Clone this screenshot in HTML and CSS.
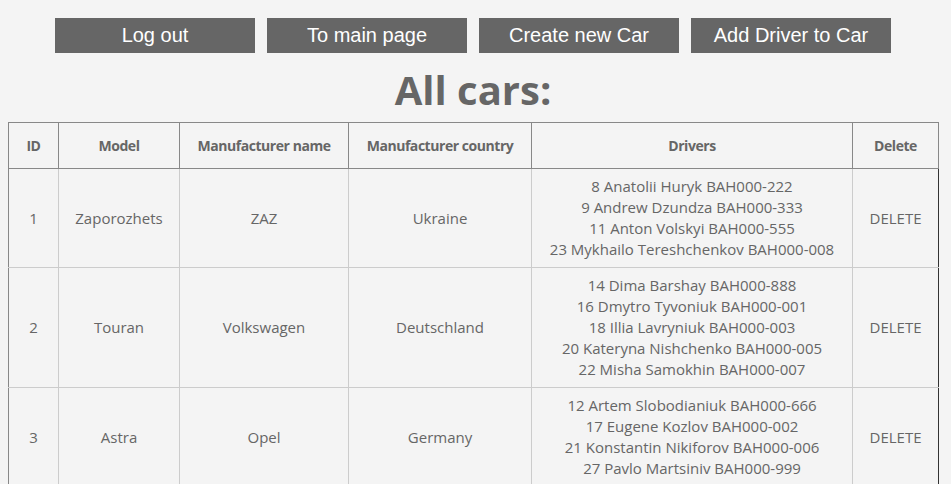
FILE: index.html
```html
<!DOCTYPE html>
<html>
<head>
<meta charset="utf-8">
<link rel="stylesheet" href="styles.css">
</head>
<body>
<nav class="actions">
  <a class="btn" href="#">Log out</a>
  <a class="btn" href="#">To main page</a>
  <a class="btn" href="#">Create new Car</a>
  <a class="btn" href="#">Add Driver to Car</a>
</nav>
<h1 class="title">All cars:</h1>
<table class="cars">
  <colgroup>
    <col class="c-id"><col class="c-model"><col class="c-man"><col class="c-country"><col class="c-drivers"><col class="c-del">
  </colgroup>
  <thead>
    <tr><th>ID</th><th>Model</th><th>Manufacturer name</th><th>Manufacturer country</th><th>Drivers</th><th>Delete</th></tr>
  </thead>
  <tbody>
    <tr>
      <td>1</td><td>Zaporozhets</td><td>ZAZ</td><td>Ukraine</td>
      <td>8 Anatolii Huryk BAH000-222<br>9 Andrew Dzundza BAH000-333<br>11 Anton Volskyi BAH000-555<br>23 Mykhailo Tereshchenkov BAH000-008</td>
      <td>DELETE</td>
    </tr>
    <tr>
      <td>2</td><td>Touran</td><td>Volkswagen</td><td>Deutschland</td>
      <td>14 Dima Barshay BAH000-888<br>16 Dmytro Tyvoniuk BAH000-001<br>18 Illia Lavryniuk BAH000-003<br>20 Kateryna Nishchenko BAH000-005<br>22 Misha Samokhin BAH000-007</td>
      <td>DELETE</td>
    </tr>
    <tr>
      <td>3</td><td>Astra</td><td>Opel</td><td>Germany</td>
      <td>12 Artem Slobodianiuk BAH000-666<br>17 Eugene Kozlov BAH000-002<br>21 Konstantin Nikiforov BAH000-006<br>27 Pavlo Martsiniv BAH000-999</td>
      <td>DELETE</td>
    </tr>
  </tbody>
</table>
</body>
</html>
```
FILE: styles.css
```css
html, body { background: #f4f4f4; }
body {
  margin: 0;
  padding: 18px 13px 0 8px;
  font-family: "Open Sans", "DejaVu Sans", sans-serif;
  color: #666;
}
.actions {
  display: flex;
  justify-content: center;
  gap: 12px;
}
.btn {
  display: block;
  width: 200px;
  height: 35px;
  line-height: 35px;
  background: #666;
  color: #fff;
  text-align: center;
  text-decoration: none;
  font-family: "Liberation Sans", Arial, sans-serif;
  font-size: 20px;
}
.title {
  margin: 12px 0 7px;
  text-align: center;
  font-size: 40px;
  line-height: 50px;
  font-weight: bold;
  color: #666;
}
.cars {
  width: 931px;
  border-collapse: collapse;
  font-size: 15px;
  line-height: 21px;
  text-align: center;
  color: #666;
}
.c-id { width: 50px; }
.c-model { width: 121px; }
.c-man { width: 169px; }
.c-country { width: 183px; }
.c-drivers { width: 321px; }
.c-del { width: 86px; }
.cars th {
  border: 1px solid #888;
  padding: 12px 4px;
  font-size: 14px;
  letter-spacing: -0.45px;
  font-weight: bold;
}
.cars td {
  border: 1px solid #ccc;
  padding: 7px 4px;
}
.cars tbody tr td:first-child { border-left: 1px solid #888; }
.cars tbody tr td:last-child { border-right: 1px solid #333; }
```
